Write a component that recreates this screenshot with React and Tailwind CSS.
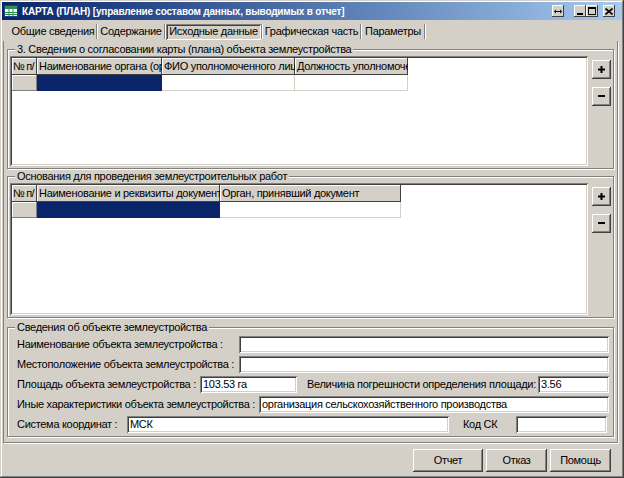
import React from 'react';

const raised = 'shadow-[inset_-1px_-1px_#404040,inset_1px_1px_#ffffff,inset_-2px_-2px_#808080,inset_2px_2px_#d4d0c8]';
const sunken = 'shadow-[inset_1px_1px_#808080,inset_-1px_-1px_#ffffff,inset_2px_2px_#404040,inset_-2px_-2px_#d4d0c8]';
const field = 'bg-white h-[17px] px-[3px] leading-[17px] whitespace-nowrap overflow-hidden shadow-[inset_1px_1px_#808080,inset_-1px_-1px_#ffffff,inset_2px_2px_#404040,inset_-2px_-2px_#d4d0c8]';

const tabs = [
  { label: 'Общие сведения', w: 'w-[86px]' },
  { label: 'Содержание', w: 'w-[66px]' },
  { label: 'Исходные данные', w: 'w-[95px]', active: true },
  { label: 'Графическая часть', w: 'w-[97px]' },
  { label: 'Параметры', w: 'w-[62px]' },
];

// первая колонка — номер строки, текст ужат, чтобы влезло "№ п/"
const approvalCols = [
  { label: '№ п/', w: 'w-[25px]', tight: true },
  { label: 'Наименование органа (организации)', w: 'w-[125px]' },
  { label: 'ФИО уполномоченного лица', w: 'w-[133px]' },
  { label: 'Должность уполномоченного лица', w: 'w-[113px]' },
];

const basisCols = [
  { label: '№ п/', w: 'w-[25px]', tight: true },
  { label: 'Наименование и реквизиты документа', w: 'w-[183px]' },
  { label: 'Орган, принявший документ', w: 'w-[181px]' },
];

const AppIcon = () => (
  <svg width="14" height="12" viewBox="0 0 14 12" className="shrink-0">
    <rect x="0.5" y="0.5" width="13" height="11" fill="#ffffff" stroke="#1d3f8a" />
    <rect x="1" y="1" width="12" height="3" fill="#2f8f4e" />
    <path d="M1 7.5h12M1 9.5h12M5 4v7M9 4v7" stroke="#2f8f4e" strokeWidth="1" />
  </svg>
);

const CaptionButton = ({ children, className = '' }) => (
  <div className={`w-[12px] h-[12px] bg-[#d4d0c8] flex items-center justify-center shadow-[inset_-1px_-1px_#404040,inset_1px_1px_#ffffff] ${className}`}>
    {children}
  </div>
);

const TitleBar = () => (
  <div className="h-[18px] flex items-center bg-gradient-to-r from-[#0a246a] to-[#a6caf0] pl-[2px] pr-[7px] gap-[4px]">
    <AppIcon />
    <div className="flex-1 text-white font-bold text-[10px] tracking-[-0.2px] whitespace-nowrap overflow-hidden">
      КАРТА (ПЛАН) [управление составом данных, выводимых в отчет]
    </div>
    <CaptionButton className="mr-[6px]">
      <svg width="8" height="5" viewBox="0 0 8 5">
        <path d="M0 2.5L2 0.5V4.5ZM8 2.5L6 0.5V4.5Z" fill="#000" />
        <path d="M2 2h4v1H2z" fill="#000" />
      </svg>
    </CaptionButton>
    <div className="flex gap-0">
      <CaptionButton>
        <svg width="6" height="8" viewBox="0 0 6 8"><path d="M0 6h6v2H0z" fill="#000" /></svg>
      </CaptionButton>
      <CaptionButton>
        <svg width="8" height="8" viewBox="0 0 8 8"><path d="M0.5 0.5h7v7h-7z" fill="none" stroke="#000" /><path d="M0 0h8v2H0z" fill="#000" /></svg>
      </CaptionButton>
    </div>
    <CaptionButton className="ml-[1px]">
      <svg width="8" height="7" viewBox="0 0 8 7"><path d="M0.5 0.5L7.5 6.5M7.5 0.5L0.5 6.5" stroke="#000" strokeWidth="1.6" /></svg>
    </CaptionButton>
  </div>
);

const TabRow = () => (
  <div className="h-[21px] flex items-center pl-[8px] pt-[2px]">
    {tabs.map((t) => (
      <div key={t.label} className="flex items-center">
        <div
          className={`${t.w} h-[16px] flex items-center justify-center whitespace-nowrap ${
            t.active ? sunken + ' bg-[#d4d0c8]' : ''
          }`}
        >
          {t.label}
        </div>
        <div className="w-[2px] h-[15px] border-l border-[#808080] border-r border-r-white" />
      </div>
    ))}
  </div>
);

const SmallButton = ({ minus }) => (
  <div className={`w-[19px] h-[19px] bg-[#d4d0c8] flex items-center justify-center ${raised}`}>
    {minus ? (
      <svg width="7" height="3" viewBox="0 0 7 3"><path d="M0 0h7v2H0z" fill="#000" /></svg>
    ) : (
      <svg width="7" height="7" viewBox="0 0 7 7"><path d="M2.5 0h2v2.5H7v2H4.5V7h-2V4.5H0v-2h2.5z" fill="#000" /></svg>
    )}
  </div>
);

const Grid = ({ columns, height }) => (
  <div className={`flex-1 bg-white p-[2px] ${height} ${sunken}`}>
    <div className="flex h-[17px]">
      {columns.map((c) => (
        <div
          key={c.label}
          className={`${c.w} h-[17px] shrink-0 bg-[#d4d0c8] leading-[17px] whitespace-nowrap overflow-hidden shadow-[inset_-1px_-1px_#404040,inset_1px_1px_#ffffff] ${
            c.tight ? 'pl-[1px] tracking-[-0.8px]' : 'pl-[2px]'
          }`}
        >
          {c.label}
        </div>
      ))}
    </div>
    <div className="flex h-[16px]">
      {columns.map((c, i) => (
        <div
          key={c.label}
          className={`${c.w} h-[16px] shrink-0 ${
            i === 0
              ? 'bg-[#d4d0c8] shadow-[inset_-1px_-1px_#808080,inset_1px_1px_#ffffff]'
              : i === 1
              ? 'bg-[#0a246a]'
              : 'bg-white border-r border-b border-[#d4d0c8]'
          }`}
        />
      ))}
    </div>
  </div>
);

const Group = ({ title, children, className = '' }) => (
  <fieldset className={`border border-[#808080] shadow-[inset_1px_1px_#ffffff,1px_1px_#ffffff] mx-[3px] ${className}`}>
    <legend className="ml-[7px] px-[2px] bg-[#d4d0c8] leading-[13px] relative">{title}</legend>
    {children}
  </fieldset>
);

const GridSection = ({ title, columns, height, className }) => (
  <Group title={title} className={className}>
    <div className="flex gap-[4px] px-[2px] pb-[2px]">
      <Grid columns={columns} height={height} />
      <div className="flex flex-col gap-[8px] pt-[4px]">
        <SmallButton />
        <SmallButton minus />
      </div>
    </div>
  </Group>
);

const DialogButton = ({ children, w }) => (
  <div className={`${w} h-[23px] bg-[#d4d0c8] flex items-center justify-center ${raised}`}>{children}</div>
);

export default function App() {
  return (
    <div className="w-[624px] h-[478px] bg-[#d4d0c8] text-[11px] tracking-[-0.3px] text-black font-['Liberation_Sans',Arial,sans-serif] flex flex-col pt-[2px] px-[2px] shadow-[inset_-1px_-1px_#404040,inset_1px_1px_#d4d0c8,inset_-2px_-2px_#808080,inset_2px_2px_#ffffff] overflow-hidden">
      <TitleBar />
      <TabRow />
      <div className="h-[402px] ml-[1px] mr-[4px] pt-[2px] border-l border-[#808080] border-b border-r shadow-[1px_1px_#ffffff] flex flex-col">
        <GridSection title="3. Сведения о согласовании карты (плана) объекта землеустройства" columns={approvalCols} height="h-[110px]" />
        <GridSection title="Основания для проведения землеустроительных работ" columns={basisCols} height="h-[132px]" className="mt-[1px]" />
        <Group title="Сведения об объекте землеустройства" className="mt-[3px]">
          <div className="flex flex-col pl-[9px] pr-[4px] pb-[2px]">
            <div className="h-[20px] flex items-center">
              <div className="w-[222px] whitespace-nowrap">Наименование объекта землеустройства :</div>
              <div className={`flex-1 ${field}`} />
            </div>
            <div className="h-[20px] flex items-center">
              <div className="w-[222px] whitespace-nowrap">Местоположение объекта землеустройства :</div>
              <div className={`flex-1 ${field}`} />
            </div>
            <div className="h-[20px] flex items-center">
              <div className="w-[183px] whitespace-nowrap">Площадь объекта землеустройства :</div>
              <div className={`w-[97px] ${field}`}>103.53 га</div>
              <div className="ml-[10px] w-[231px] whitespace-nowrap">Величина погрешности определения площади:</div>
              <div className={`flex-1 ${field}`}>3.56</div>
            </div>
            <div className="h-[20px] flex items-center">
              <div className="w-[242px] whitespace-nowrap">Иные характеристики объекта землеустройства :</div>
              <div className={`flex-1 ${field}`}>организация сельскохозяйственного производства</div>
            </div>
            <div className="h-[20px] flex items-center">
              <div className="w-[110px] whitespace-nowrap">Система координат :</div>
              <div className={`w-[322px] ${field}`}>МСК</div>
              <div className="ml-[14px] w-[53px] whitespace-nowrap">Код СК</div>
              <div className={`flex-1 mr-[2px] ${field}`} />
            </div>
          </div>
        </Group>
      </div>
      <div className="flex-1 flex justify-end items-start pt-[6px] pr-[11px] gap-[3px]">
        <DialogButton w="w-[70px]">Отчет</DialogButton>
        <DialogButton w="w-[61px]">Отказ</DialogButton>
        <DialogButton w="w-[61px]">Помощь</DialogButton>
      </div>
    </div>
  );
}
